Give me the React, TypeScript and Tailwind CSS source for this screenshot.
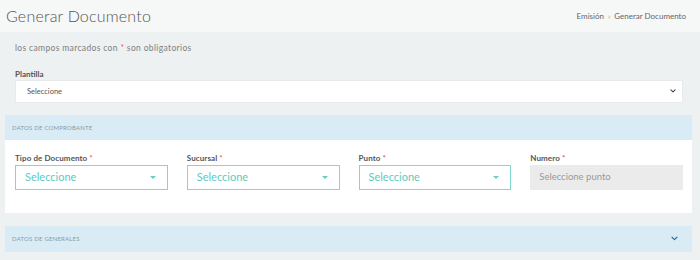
import React from "react";

function Chevron({ className }: { className?: string }) {
  return (
    <svg viewBox="0 0 10 6" className={className} fill="none" stroke="currentColor" strokeWidth={1.8} strokeLinecap="round" strokeLinejoin="round">
      <path d="M1.5 1.2 L5 4.6 L8.5 1.2" />
    </svg>
  );
}

function Caret() {
  return <span className="block w-0 h-0 border-l-[3px] border-r-[3px] border-t-[3px] border-l-transparent border-r-transparent border-t-[#67cfc4]" />;
}

function Field({ label, children }: { label: string; children: React.ReactNode }) {
  return (
    <div className="flex flex-col">
      <label className="text-[8px] leading-[10px] font-bold text-[#555] mb-[2px] tracking-[0.1px]">
        {label} <span className="text-[#ee5f5b]">*</span>
      </label>
      {children}
    </div>
  );
}

function TealSelect() {
  return (
    <div className="h-[25px] border border-[#7fd9cf] bg-white flex items-center justify-between pl-[9px] pr-[11px]">
      <span className="text-[11px] text-[#5ccbc0]">Seleccione</span>
      <Caret />
    </div>
  );
}

export default function App() {
  return (
    <div className="w-[700px] h-[260px] overflow-hidden bg-[#eef1f2] font-['Lato','Open_Sans',sans-serif]">
      {/* encabezado */}
      <div className="h-[32px] bg-[#f6f7f7] flex items-center justify-between pl-[6px] pr-[14px]">
        <h1 className="text-[16px] font-light text-[#555] tracking-[0.2px]">Generar Documento</h1>
        <div className="text-[8px] text-[#666] flex items-center gap-[4px]">
          <span>Emisión</span>
          <span className="text-[#999]">›</span>
          <span>Generar Documento</span>
        </div>
      </div>

      <div className="px-[5px] pt-[10px]">
        <p className="pl-[10px] text-[8.5px] text-[#808080] tracking-[0.35px]">
          los campos marcados con <span className="text-[#ee5f5b]">*</span> son obligatorios
        </p>

        <div className="pl-[10px] pr-[12px] mt-[14px]">
          <label className="block text-[8px] leading-[10px] font-bold text-[#555] mb-[1px]">Plantilla</label>
          <div className="h-[23px] bg-white border border-[#e8eaeb] flex items-center justify-between pl-[11px] pr-[6px]">
            <span className="text-[7.5px] text-[#555]">Seleccione</span>
            <Chevron className="w-[6px] h-[4px] text-[#444]" />
          </div>
        </div>

        {/* datos de comprobante */}
        <div className="mt-[12px] mr-[3px]">
          <div className="h-[25px] bg-[#d9ecf5] flex items-center pl-[7px]">
            <span className="text-[6px] uppercase text-[#8a9aa3] tracking-[0.2px]">Datos de comprobante</span>
          </div>
          <div className="bg-white h-[73px] pt-[13px] pl-[10px] pr-[9px]">
            <div className="grid grid-cols-4 gap-x-[19px]">
              <Field label="Tipo de Documento">
                <TealSelect />
              </Field>
              <Field label="Sucursal">
                <TealSelect />
              </Field>
              <Field label="Punto">
                <TealSelect />
              </Field>
              <Field label="Numero">
                <div className="h-[25px] bg-[#ebebeb] flex items-center pl-[9px]">
                  <span className="text-[9.5px] text-[#999]">Seleccione punto</span>
                </div>
              </Field>
            </div>
          </div>
        </div>

        {/* datos generales */}
        <div className="mt-[13px] mr-[3px] h-[26px] bg-[#d9ecf5] flex items-center justify-between pl-[7px] pr-[14px]">
          <span className="text-[6px] uppercase text-[#8a9aa3] tracking-[0.2px]">Datos de generales</span>
          <Chevron className="w-[7px] h-[5px] text-[#3f6f9a]" />
        </div>
      </div>
    </div>
  );
}
